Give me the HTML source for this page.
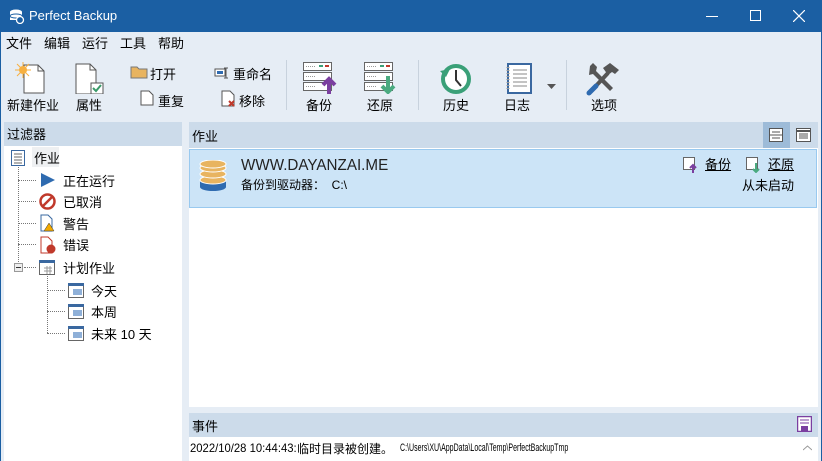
<!DOCTYPE html>
<html><head><meta charset="utf-8"><style>
*{margin:0;padding:0;box-sizing:border-box}
body{width:822px;height:461px;overflow:hidden;background:#e6edf5;font-family:"Liberation Sans","Noto Sans CJK SC",sans-serif;font-size:13px;color:#000;position:relative}
.abs{position:absolute}
.title{left:0;top:0;width:822px;height:32px;background:#1b5fa3;color:#fff;font-size:13px}
.menu{top:32px;left:1px;height:20px;width:820px;background:#e6edf5}
.menu span{position:absolute;top:1px}
.lbl{position:absolute;font-size:13px;white-space:nowrap}
.hdr{background:#ccdbea}
.t{position:absolute;font-size:13px;white-space:nowrap}
.dot{position:absolute;border-left:1px dotted #777}
.doth{position:absolute;border-top:1px dotted #777}
</style></head><body>
<div class="abs title">
 <svg class="abs" style="left:9px;top:8px" width="16" height="16"><ellipse cx="7" cy="4" rx="6" ry="2.5" fill="#fff"/><rect x="1" y="4" width="12" height="8" fill="#fff"/><ellipse cx="7" cy="8" rx="6" ry="2" fill="none" stroke="#1b5fa3"/><circle cx="11" cy="12" r="3.5" fill="#1b5fa3" stroke="#fff" stroke-width="1.3"/></svg>
 <span class="abs" style="left:29px;top:8px">Perfect Backup</span>
 <div class="abs" style="left:706px;top:16px;width:12px;height:1px;background:#fff"></div>
 <div class="abs" style="left:750px;top:10px;width:11px;height:11px;border:1px solid #fff"></div>
 <svg class="abs" style="left:793px;top:10px" width="12" height="12"><path d="M0 0L12 12M12 0L0 12" stroke="#fff" stroke-width="1.2"/></svg>
</div>
<div class="abs" style="left:0;top:32px;width:1px;height:429px;background:#1b5fa3"></div>
<div class="abs" style="left:821px;top:32px;width:1px;height:429px;background:#1b5fa3"></div>
<div class="abs menu"><span style="left:5px">文件</span><span style="left:43px">编辑</span><span style="left:81px">运行</span><span style="left:119px">工具</span><span style="left:157px">帮助</span></div>

<svg class="abs" style="left:14px;top:62px" width="36" height="32"><path d="M10 3h14l6 6v22H10z" fill="#fff" stroke="#555"/><path d="M24 3v6h6" fill="none" stroke="#555"/><circle cx="9" cy="8" r="4" fill="#f7b040"/><path d="M9 0v16M1 8h16M3 2l12 12M15 2L3 14" stroke="#f7b040" stroke-width="1"/></svg>
<span class="lbl" style="left:7px;top:95px">新建作业</span>
<svg class="abs" style="left:74px;top:62px" width="32" height="32"><path d="M2 2h14l6 6v24H2z" fill="#fff" stroke="#555"/><path d="M16 2v6h6" fill="none" stroke="#555"/><rect x="17" y="21" width="12" height="11" fill="#fff" stroke="#555"/><path d="M19 26l3 3 5-6" stroke="#3a9a6a" stroke-width="2" fill="none"/></svg>
<span class="lbl" style="left:76px;top:95px">属性</span>
<svg class="abs" style="left:130px;top:65px" width="18" height="14"><path d="M1 2h6l2 2h8v9H1z" fill="#e8b460" stroke="#777"/></svg>
<span class="lbl" style="left:150px;top:64px">打开</span>
<svg class="abs" style="left:140px;top:90px" width="14" height="16"><path d="M1 1h8l4 4v10H1z" fill="#fff" stroke="#555"/></svg>
<span class="lbl" style="left:158px;top:91px">重复</span>
<svg class="abs" style="left:214px;top:67px" width="16" height="12"><rect x="1" y="2" width="10" height="7" fill="#fff" stroke="#555"/><rect x="3" y="4" width="6" height="3" fill="#2f6bb0"/><path d="M12 1v10M10 1h4M10 11h4" stroke="#555"/></svg>
<span class="lbl" style="left:233px;top:64px">重命名</span>
<svg class="abs" style="left:221px;top:90px" width="16" height="18"><path d="M1 1h8l4 4v11H1z" fill="#fff" stroke="#555"/><path d="M8 11l5 5M13 11l-5 5" stroke="#c0392b" stroke-width="2"/></svg>
<span class="lbl" style="left:239px;top:91px">移除</span>
<div class="abs" style="left:286px;top:60px;width:1px;height:50px;background:#c8d2dd"></div>
<svg class="abs" style="left:303px;top:62px" width="34" height="32"><g fill="#fff" stroke="#666"><rect x="0.5" y="0.5" width="28" height="8"/><rect x="0.5" y="10.5" width="28" height="8"/><rect x="0.5" y="20.5" width="28" height="8"/></g><g stroke="#999" stroke-dasharray="1 1"><path d="M3 4.5h10M3 14.5h10M3 24.5h10"/></g><rect x="22" y="3" width="4" height="2" fill="#c0392b"/><rect x="16" y="3" width="4" height="2" fill="#3aa078"/><path d="M26 32V18M20 23l6-6 6 6" stroke="#7b3fa0" stroke-width="4" fill="none"/></svg>
<span class="lbl" style="left:306px;top:95px">备份</span>
<svg class="abs" style="left:364px;top:62px" width="34" height="32"><g fill="#fff" stroke="#666"><rect x="0.5" y="0.5" width="28" height="8"/><rect x="0.5" y="10.5" width="28" height="8"/><rect x="0.5" y="20.5" width="28" height="8"/></g><g stroke="#999" stroke-dasharray="1 1"><path d="M3 4.5h10M3 14.5h10M3 24.5h10"/></g><rect x="22" y="3" width="4" height="2" fill="#c0392b"/><rect x="16" y="3" width="4" height="2" fill="#3aa078"/><path d="M24 14v16M18 24l6 6 6-6" stroke="#4aaa80" stroke-width="4" fill="none"/></svg>
<span class="lbl" style="left:367px;top:95px">还原</span>
<div class="abs" style="left:418px;top:60px;width:1px;height:50px;background:#c8d2dd"></div>
<svg class="abs" style="left:439px;top:63px" width="34" height="32"><circle cx="17" cy="16" r="13" fill="#fff" stroke="#3aa078" stroke-width="4"/><path d="M1 8l6 6 4-8z" fill="#3aa078"/><path d="M17 7v10l5 6" stroke="#333" stroke-width="2" fill="none"/></svg>
<span class="lbl" style="left:443px;top:95px">历史</span>
<svg class="abs" style="left:505px;top:63px" width="28" height="32"><rect x="3" y="1" width="23" height="29" fill="#fff" stroke="#3a68a0" stroke-width="2"/><path d="M8 7h14M8 11h14M8 15h14M8 19h14M8 23h14" stroke="#888"/><path d="M3 4v24" stroke="#999" stroke-dasharray="1 2" stroke-width="3"/></svg>
<span class="lbl" style="left:504px;top:95px">日志</span>
<svg class="abs" style="left:547px;top:84px" width="9" height="5"><path d="M0 0h9L4.5 5z" fill="#555"/></svg>
<div class="abs" style="left:566px;top:60px;width:1px;height:50px;background:#c8d2dd"></div>
<svg class="abs" style="left:586px;top:62px" width="34" height="34"><path d="M4 4l3-3 4 4-1 4 17 17-3 3-17-17-4 1z" fill="#555"/><path d="M8 26L22 11" stroke="#555" stroke-width="4"/><path d="M3 31l7-7" stroke="#2f6bb0" stroke-width="5" stroke-linecap="round"/><path d="M17 6l7-5 9 7-4 4-3-2-4 3z" fill="#555"/></svg>
<span class="lbl" style="left:591px;top:95px">选项</span>

<div class="abs hdr" style="left:4px;top:122px;width:178px;height:24px"></div>
<span class="t" style="left:7px;top:124px">过滤器</span>
<div class="abs" style="left:4px;top:146px;width:178px;height:315px;background:#fff"></div>
<svg class="abs" style="left:11px;top:150px" width="14" height="16"><rect x="0.5" y="0.5" width="13" height="15" fill="#fff" stroke="#3a68a0"/><path d="M3 4h8M3 7h8M3 10h8M3 13h8" stroke="#666"/></svg>
<div class="abs" style="left:32px;top:147px;width:27px;height:20px;background:#eef0f2"></div>
<span class="t" style="left:34px;top:148px">作业</span>
<div class="dot" style="left:18px;top:167px;height:95px"></div>
<div class="doth" style="left:18px;top:180px;width:18px"></div>
<div class="doth" style="left:18px;top:201px;width:18px"></div>
<div class="doth" style="left:18px;top:223px;width:18px"></div>
<div class="doth" style="left:18px;top:244px;width:18px"></div>
<div class="doth" style="left:24px;top:267px;width:12px"></div>
<div class="abs" style="left:14px;top:263px;width:9px;height:9px;border:1px solid #999;background:#eee"></div>
<div class="abs" style="left:16px;top:267px;width:5px;height:1px;background:#333"></div>
<svg class="abs" style="left:40px;top:172px" width="16" height="16"><path d="M1 1l14 7-14 7z" fill="#2f6bb0"/></svg>
<span class="t" style="left:63px;top:171px">正在运行</span>
<svg class="abs" style="left:39px;top:193px" width="17" height="17"><circle cx="8.5" cy="8.5" r="7" fill="none" stroke="#c0392b" stroke-width="2.5"/><path d="M4 13L13 4" stroke="#c0392b" stroke-width="2.5"/></svg>
<span class="t" style="left:63px;top:192px">已取消</span>
<svg class="abs" style="left:40px;top:214px" width="16" height="18"><path d="M1 1h7l4 4v12H1z" fill="#fff" stroke="#3a68a0"/><path d="M9 9l5 8H4z" fill="#f2a900" stroke="#333" stroke-width=".5"/></svg>
<span class="t" style="left:63px;top:214px">警告</span>
<svg class="abs" style="left:40px;top:236px" width="16" height="18"><path d="M1 1h7l4 4v12H1z" fill="#fff" stroke="#c0392b"/><circle cx="11" cy="13" r="4.5" fill="#c0392b"/></svg>
<span class="t" style="left:63px;top:235px">错误</span>
<svg class="abs" style="left:39px;top:259px" width="16" height="16"><rect x="0.5" y="1.5" width="15" height="14" fill="#fff" stroke="#666"/><rect x="0" y="1" width="16" height="3" fill="#3a68a0"/><path d="M5 9h8M5 12h8M8 7v8M11 7v8" stroke="#999"/></svg>
<span class="t" style="left:63px;top:258px">计划作业</span>
<div class="dot" style="left:47px;top:276px;height:57px"></div>
<div class="doth" style="left:47px;top:290px;width:18px"></div>
<div class="doth" style="left:47px;top:311px;width:18px"></div>
<div class="doth" style="left:47px;top:333px;width:18px"></div>
<svg class="abs" style="left:68px;top:282px" width="16" height="16"><rect x="0.5" y="1.5" width="15" height="14" fill="#fff" stroke="#666"/><rect x="0" y="1" width="16" height="3" fill="#3a68a0"/><rect x="5" y="7" width="9" height="6" fill="#8fb0d8"/></svg>
<span class="t" style="left:91px;top:281px">今天</span>
<svg class="abs" style="left:68px;top:303px" width="16" height="16"><rect x="0.5" y="1.5" width="15" height="14" fill="#fff" stroke="#666"/><rect x="0" y="1" width="16" height="3" fill="#3a68a0"/><rect x="5" y="7" width="9" height="6" fill="#8fb0d8"/></svg>
<span class="t" style="left:91px;top:302px">本周</span>
<svg class="abs" style="left:68px;top:325px" width="16" height="16"><rect x="0.5" y="1.5" width="15" height="14" fill="#fff" stroke="#666"/><rect x="0" y="1" width="16" height="3" fill="#3a68a0"/><rect x="5" y="7" width="9" height="6" fill="#8fb0d8"/></svg>
<span class="t" style="left:91px;top:324px">未来 10 天</span>

<div class="abs hdr" style="left:189px;top:122px;width:629px;height:26px"></div>
<span class="t" style="left:192px;top:126px">作业</span>
<div class="abs" style="left:763px;top:122px;width:27px;height:26px;background:#9dbbd8"></div>
<svg class="abs" style="left:769px;top:128px" width="14" height="14"><rect x="0.5" y="0.5" width="13" height="13" fill="#fff" stroke="#555"/><path d="M1 7h12M3 4h8M3 10h8" stroke="#555"/></svg>
<svg class="abs" style="left:796px;top:128px" width="15" height="14"><rect x="0.5" y="0.5" width="14" height="13" fill="#fff" stroke="#555"/><path d="M1 3h13" stroke="#555" stroke-width="2"/><path d="M3 6h9M3 8h9M3 10h9" stroke="#555"/></svg>
<div class="abs" style="left:189px;top:148px;width:629px;height:259px;background:#fff"></div>
<div class="abs" style="left:189px;top:149px;width:628px;height:59px;background:#cce4f7;border:1px solid #99c9ef"></div>
<svg class="abs" style="left:199px;top:160px" width="30" height="32"><ellipse cx="14" cy="27" rx="13" ry="4" fill="#2f6bb0"/><rect x="1" y="20" width="26" height="7" fill="#2f6bb0"/><g fill="#e8b460" stroke="#fff" stroke-width="1"><ellipse cx="14" cy="20" rx="13" ry="4"/><ellipse cx="14" cy="14" rx="13" ry="4"/><ellipse cx="14" cy="8" rx="13" ry="4"/><ellipse cx="14" cy="4" rx="13" ry="4"/></g></svg>
<span class="t" style="left:241px;top:157px;font-size:16px;color:#222;transform:scaleX(.95);transform-origin:0 0">WWW.DAYANZAI.ME</span>
<span class="t" style="left:241px;top:176px;font-size:12px">备份到驱动器：&nbsp; C:\</span>
<svg class="abs" style="left:683px;top:157px" width="14" height="16"><rect x="0.5" y="0.5" width="11" height="12" fill="#fff" stroke="#666"/><path d="M10 16V8M7 11l3-3 3 3" stroke="#7b3fa0" stroke-width="2" fill="none"/></svg>
<span class="t" style="left:705px;top:154px;text-decoration:underline">备份</span>
<svg class="abs" style="left:746px;top:157px" width="14" height="16"><rect x="0.5" y="0.5" width="11" height="12" fill="#fff" stroke="#666"/><path d="M10 6v9M7 12l3 3 3-3" stroke="#4aaa80" stroke-width="2" fill="none"/></svg>
<span class="t" style="left:768px;top:154px;text-decoration:underline">还原</span>
<span class="t" style="left:742px;top:175px">从未启动</span>

<div class="abs hdr" style="left:189px;top:413px;width:629px;height:24px"></div>
<span class="t" style="left:192px;top:416px">事件</span>
<svg class="abs" style="left:797px;top:416px" width="15" height="16"><rect x="0.5" y="0.5" width="14" height="15" fill="#fff" stroke="#7b3fa0" stroke-width="1.5"/><path d="M3 4h9M3 7h9" stroke="#7b3fa0"/><rect x="4" y="10" width="7" height="5" fill="#7b3fa0"/></svg>
<div class="abs" style="left:189px;top:437px;width:629px;height:24px;background:#fff"></div>
<span class="t" style="left:190px;top:441px;font-size:12px;transform:scaleX(.94);transform-origin:0 0">2022/10/28 10:44:43:</span>
<span class="t" style="left:297px;top:440px;font-size:12px">临时目录被创建。</span>
<span class="t" style="left:400px;top:442px;font-size:11px;transform:scaleX(.64);transform-origin:0 0">C:\Users\XU\AppData\Local\Temp\PerfectBackupTmp</span>
<svg class="abs" style="left:803px;top:445px" width="9" height="6"><path d="M0 5l4.5-4 4.5 4" stroke="#999" fill="none"/></svg>
</body></html>
